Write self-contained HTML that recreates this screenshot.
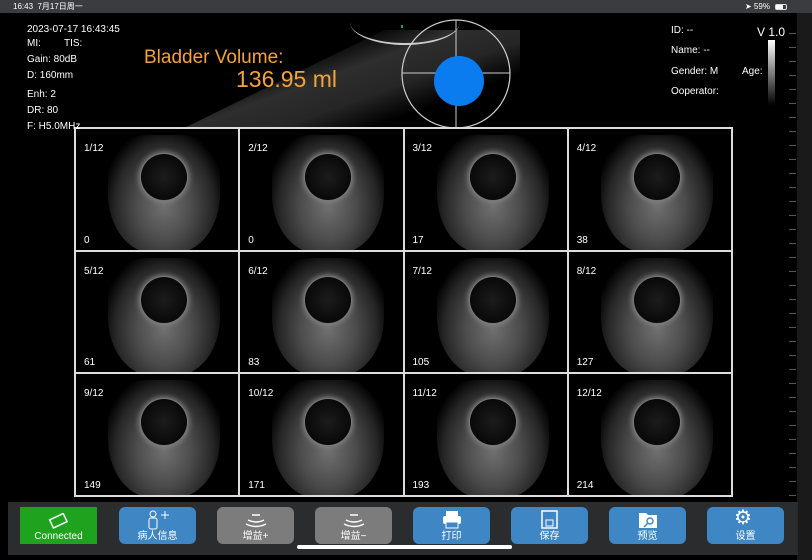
<!DOCTYPE html>
<html><head><meta charset="utf-8"><style>
*{margin:0;padding:0;box-sizing:border-box}
body{width:812px;height:560px;background:#000;position:relative;overflow:hidden;font-family:"Liberation Sans","Noto Sans CJK SC",sans-serif;color:#fff}
.sb{position:absolute;left:0;top:0;width:812px;height:13px;background:#3b3c3f;font-size:8px;line-height:13px;color:#fff}
.t{position:absolute;font-size:10px;color:#fff;white-space:nowrap;z-index:3}
.o{position:absolute;color:#f2a43a;white-space:nowrap}
.grid{position:absolute;left:74px;top:127px;width:659px;height:370px;border:1px solid #ddd;display:grid;grid-template-columns:repeat(4,1fr);grid-template-rows:repeat(3,1fr);background:#000}
.c{border:1px solid #ddd;position:relative;overflow:hidden;background:#000}
.c .b{position:absolute;left:32px;top:6px;width:112px;height:118px;border-radius:35% 35% 40% 40%/25% 25% 50% 50%;background:radial-gradient(ellipse at 50% 60%,#707070 0%,#4c4c4c 35%,#262626 62%,#000 80%)}
.c .h{position:absolute;left:65px;top:25px;width:46px;height:46px;border-radius:50%;background:radial-gradient(circle,#1c1c1c,#060606 80%);box-shadow:0 0 0 1px #777,0 0 6px 2px #888}
.c .cap{position:absolute;left:8px;top:14px;font-size:10px}
.c .n{position:absolute;left:8px;bottom:4px;font-size:10px}
.bar{position:absolute;left:8px;top:502px;width:790px;height:53px;background:#2b2c2e}
.btn{position:absolute;top:507px;width:77px;height:37px;border-radius:6px;background:#3e86c4;color:#fff;font-size:10px;text-align:center}
.btn span{position:absolute;left:0;right:0;bottom:2px}
.g{background:#7c7c7c}
</style></head><body>
<div class="sb"><span style="position:absolute;left:13px">16:43 &nbsp;7月17日周一</span><span style="position:absolute;left:745px">➤ 59%</span><span style="position:absolute;left:775px;top:4px;width:12px;height:6px;border:1px solid #ddd;border-radius:2px"><span style="display:block;width:7px;height:4px;background:#fff"></span></span></div>
<div style="position:absolute;left:180px;top:30px;width:340px;height:100px;background:linear-gradient(160deg,#000 30%,#2e2e2e 45%,#262626 60%,#000 75%);clip-path:polygon(0 100%,60% 0,100% 0,100% 100%)"></div>
<div style="position:absolute;left:350px;top:0px;width:110px;height:45px;border-radius:50%;border-bottom:2px solid #ccc"></div>
<div style="position:absolute;left:401px;top:25px;width:2px;height:3px;background:#0a6"></div>
<svg style="position:absolute;left:400px;top:18px" width="112" height="112"><circle cx="56" cy="56" r="54" fill="none" stroke="#ccc" stroke-width="1.2"/><line x1="56" y1="2" x2="56" y2="110" stroke="#ccc"/><line x1="2" y1="55" x2="110" y2="55" stroke="#ccc"/><circle cx="59" cy="63" r="25" fill="#0a7cf0"/></svg>
<div class="t" style="left:27px;top:24px">2023-07-17 16:43:45</div>
<div class="t" style="left:27px;top:38px">MI:</div><div class="t" style="left:64px;top:38px">TIS:</div>
<div class="t" style="left:27px;top:54px">Gain: 80dB</div>
<div class="t" style="left:27px;top:70px">D: 160mm</div>
<div class="t" style="left:27px;top:89px">Enh: 2</div>
<div class="t" style="left:27px;top:105px">DR: 80</div>
<div class="t" style="left:27px;top:121px">F: H5.0MHz</div>
<div class="o" style="left:144px;top:47px;font-size:19px">Bladder Volume:</div>
<div class="o" style="left:236px;top:66px;font-size:23px">136.95 ml</div>
<div class="t" style="left:671px;top:25px">ID: --</div>
<div class="t" style="left:671px;top:45px">Name: --</div>
<div class="t" style="left:671px;top:66px">Gender: M</div>
<div class="t" style="left:742px;top:66px">Age:</div>
<div class="t" style="left:671px;top:86px">Ooperator:</div>
<div class="t" style="left:757px;top:25px;font-size:12px">V 1.0</div>
<div style="position:absolute;left:768px;top:40px;width:7px;height:65px;background:linear-gradient(#fff,#000)"></div>
<div style="position:absolute;left:797px;top:13px;width:15px;height:547px;background:#1a1a1a"></div>
<div style="position:absolute;left:789px;top:20px;width:7px;height:480px;background:repeating-linear-gradient(#000 0,#000 13px,#555 13px,#555 14px)"></div>
<div class="grid">
<div class="c"><div class="b"></div><div class="h"></div><div class="cap">1/12</div><div class="n">0</div></div>
<div class="c"><div class="b"></div><div class="h"></div><div class="cap">2/12</div><div class="n">0</div></div>
<div class="c"><div class="b"></div><div class="h"></div><div class="cap">3/12</div><div class="n">17</div></div>
<div class="c"><div class="b"></div><div class="h"></div><div class="cap">4/12</div><div class="n">38</div></div>
<div class="c"><div class="b"></div><div class="h"></div><div class="cap">5/12</div><div class="n">61</div></div>
<div class="c"><div class="b"></div><div class="h"></div><div class="cap">6/12</div><div class="n">83</div></div>
<div class="c"><div class="b"></div><div class="h"></div><div class="cap">7/12</div><div class="n">105</div></div>
<div class="c"><div class="b"></div><div class="h"></div><div class="cap">8/12</div><div class="n">127</div></div>
<div class="c"><div class="b"></div><div class="h"></div><div class="cap">9/12</div><div class="n">149</div></div>
<div class="c"><div class="b"></div><div class="h"></div><div class="cap">10/12</div><div class="n">171</div></div>
<div class="c"><div class="b"></div><div class="h"></div><div class="cap">11/12</div><div class="n">193</div></div>
<div class="c"><div class="b"></div><div class="h"></div><div class="cap">12/12</div><div class="n">214</div></div>
</div>
<div class="bar"></div>
<div class="btn" style="left:20px;background:#1fa31f;border-radius:0"><svg style="position:absolute;left:28px;top:6px" width="22" height="16"><rect x="3" y="3" width="15" height="9" fill="none" stroke="#fff" stroke-width="1.5" transform="rotate(-25 11 8)"/></svg><span>Connected</span></div>
<div class="btn" style="left:119px"><svg style="position:absolute;left:24px;top:3px" width="30" height="20"><circle cx="10" cy="4" r="3" fill="none" stroke="#fff"/><rect x="6" y="8" width="8" height="11" rx="2" fill="none" stroke="#fff"/><path d="M18 5h8M22 1v8" stroke="#fff"/></svg><span>病人信息</span></div>
<div class="btn g" style="left:217px"><svg style="position:absolute;left:26px;top:5px" width="26" height="16"><path d="M9 3h8M5 8q8 4 16 0M3 12q10 5 20 0" stroke="#fff" fill="none" stroke-width="1.4"/></svg><span>增益+</span></div>
<div class="btn g" style="left:315px"><svg style="position:absolute;left:26px;top:5px" width="26" height="16"><path d="M9 3h8M5 8q8 4 16 0M3 12q10 5 20 0" stroke="#fff" fill="none" stroke-width="1.4"/></svg><span>增益−</span></div>
<div class="btn" style="left:413px"><svg style="position:absolute;left:28px;top:3px" width="22" height="20"><rect x="5" y="1" width="12" height="5" fill="#fff"/><rect x="2" y="6" width="18" height="8" rx="2" fill="#fff"/><rect x="5" y="12" width="12" height="6" fill="#3e86c4" stroke="#fff"/></svg><span>打印</span></div>
<div class="btn" style="left:511px"><svg style="position:absolute;left:29px;top:3px" width="20" height="20"><rect x="2" y="1" width="15" height="17" fill="none" stroke="#fff" stroke-width="1.5"/><rect x="6" y="10" width="7" height="6" fill="none" stroke="#fff"/></svg><span>保存</span></div>
<div class="btn" style="left:609px"><svg style="position:absolute;left:28px;top:3px" width="22" height="20"><path d="M2 3h7l2 2h9v13H2z" fill="#fff"/><circle cx="13" cy="11" r="3" fill="none" stroke="#3e86c4" stroke-width="1.4"/><path d="M11 13l-4 4" stroke="#3e86c4" stroke-width="1.5"/></svg><span>预览</span></div>
<div class="btn" style="left:707px"><div style="position:absolute;left:27px;top:0px;font-size:20px;line-height:22px">⚙</div><span>设置</span></div>
<div style="position:absolute;left:297px;top:545px;width:215px;height:4px;border-radius:2px;background:#fff"></div>
</body></html>
